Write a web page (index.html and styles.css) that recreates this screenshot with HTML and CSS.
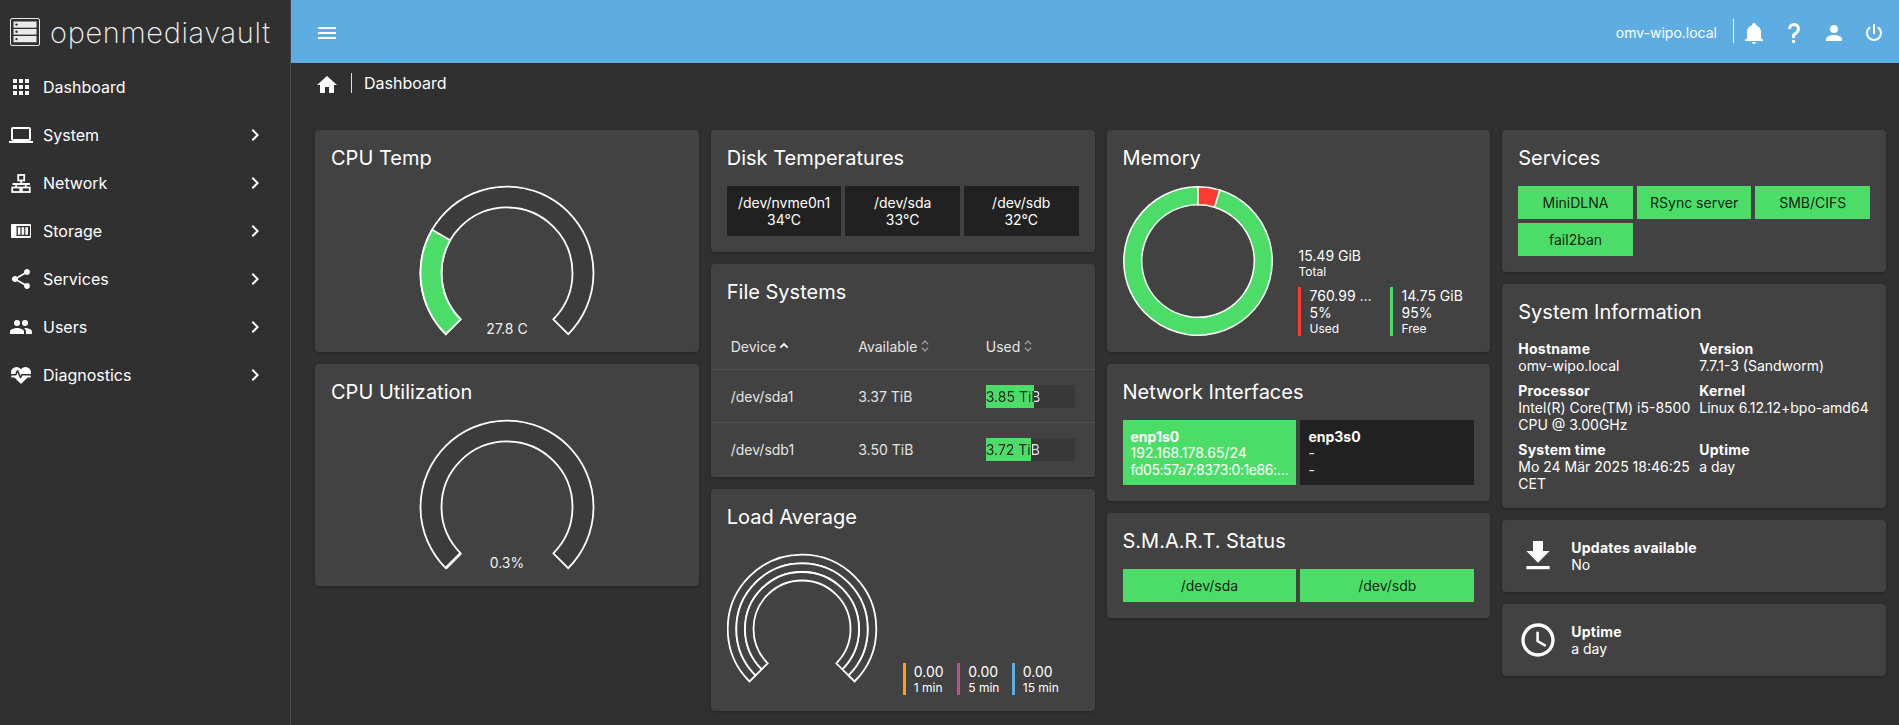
FILE: index.html
```html
<!DOCTYPE html>
<html lang="en">
<head>
<meta charset="utf-8">
<title>openmediavault</title>
<link rel="stylesheet" href="styles.css">
</head>
<body>
<div class="app">
  <aside class="sidebar">
    <div class="brand">
      <svg class="brand-icon" viewBox="0 0 30 28">
        <rect x="0.5" y="0.5" width="29" height="27" rx="1.5" class="brand-frame"/>
        <rect x="3.5" y="3.5" width="23" height="6.2" class="brand-bar"/>
        <rect x="3.5" y="11" width="23" height="5.6" class="brand-bar"/>
        <rect x="3.5" y="18" width="23" height="6.2" class="brand-bar"/>
        <circle cx="6.5" cy="6.6" r="1.2" class="brand-dot"/>
        <circle cx="6.5" cy="13.8" r="1.2" class="brand-dot"/>
        <circle cx="6.5" cy="21.1" r="1.2" class="brand-dot"/>
      </svg>
      <span class="brand-name">openmediavault</span>
    </div>
    <nav class="nav">
      <a class="nav-item"><svg class="icon" viewBox="0 0 24 24"><path d="M4 8h4V4H4v4zm6 12h4v-4h-4v4zm-6 0h4v-4H4v4zm0-6h4v-4H4v4zm6 0h4v-4h-4v4zm6-10v4h4V4h-4zm-6 4h4V4h-4v4zm6 6h4v-4h-4v4zm0 6h4v-4h-4v4z"/></svg><span class="nav-label">Dashboard</span></a>
      <a class="nav-item"><svg class="icon" viewBox="0 0 24 24"><path d="M4 6h16v10H4m16 2a2 2 0 0 0 2-2V6a2 2 0 0 0-2-2H4c-1.11 0-2 .89-2 2v10a2 2 0 0 0 2 2H0v2h24v-2h-4z"/></svg><span class="nav-label">System</span><svg class="icon" viewBox="0 0 24 24"><path d="M8.59 16.58 13.17 12 8.59 7.41 10 6l6 6-6 6-1.41-1.42z"/></svg></a>
      <a class="nav-item"><svg class="icon icon-line" viewBox="0 0 24 24"><rect x="9.200" y="4" width="6" height="5.500"/><rect x="3.200" y="16.500" width="8" height="4.500"/><rect x="12.800" y="16.500" width="8" height="4.500"/><path d="M12.200 9.500V13M3.500 13h17.400M7.200 13v3.500M16.800 13v3.500"/></svg><span class="nav-label">Network</span><svg class="icon" viewBox="0 0 24 24"><path d="M8.59 16.58 13.17 12 8.59 7.41 10 6l6 6-6 6-1.41-1.42z"/></svg></a>
      <a class="nav-item"><svg class="icon" viewBox="0 0 24 24"><path fill-rule="evenodd" d="M3 5h18a1 1 0 0 1 1 1v12a1 1 0 0 1-1 1H3a1 1 0 0 1-1-1V6a1 1 0 0 1 1-1zm4.500 2H21v10H7.500V7zm1.300 1.300v7.400h2.600V8.300H8.800zm3.800 0v7.400h2.600V8.300h-2.600zm3.800 0v7.400H19V8.300h-2.600z"/></svg><span class="nav-label">Storage</span><svg class="icon" viewBox="0 0 24 24"><path d="M8.59 16.58 13.17 12 8.59 7.41 10 6l6 6-6 6-1.41-1.42z"/></svg></a>
      <a class="nav-item"><svg class="icon" viewBox="0 0 24 24"><path d="M18 16.08c-.76 0-1.44.3-1.96.77L8.91 12.7c.05-.23.09-.46.09-.7s-.04-.47-.09-.7l7.05-4.11c.54.5 1.25.81 2.04.81 1.66 0 3-1.34 3-3s-1.34-3-3-3-3 1.34-3 3c0 .24.04.47.09.7L8.04 9.81C7.5 9.31 6.79 9 6 9c-1.66 0-3 1.34-3 3s1.34 3 3 3c.79 0 1.5-.31 2.04-.81l7.12 4.16c-.05.21-.08.43-.08.65 0 1.61 1.31 2.92 2.92 2.92s2.92-1.31 2.92-2.92-1.31-2.92-2.92-2.92z"/></svg><span class="nav-label">Services</span><svg class="icon" viewBox="0 0 24 24"><path d="M8.59 16.58 13.17 12 8.59 7.41 10 6l6 6-6 6-1.41-1.42z"/></svg></a>
      <a class="nav-item"><svg class="icon" viewBox="0 0 24 24"><path d="M16 13c-.29 0-.62.02-.97.05 1.16.84 1.97 1.97 1.97 3.45V19h6v-2.500c0-2.330-4.670-3.500-7-3.500m-8 0c-2.330 0-7 1.170-7 3.500V19h14v-2.500c0-2.330-4.670-3.500-7-3.500m0-2a3 3 0 0 0 3-3 3 3 0 0 0-3-3 3 3 0 0 0-3 3 3 3 0 0 0 3 3m8 0a3 3 0 0 0 3-3 3 3 0 0 0-3-3 3 3 0 0 0-3 3 3 3 0 0 0 3 3z"/></svg><span class="nav-label">Users</span><svg class="icon" viewBox="0 0 24 24"><path d="M8.59 16.58 13.17 12 8.59 7.41 10 6l6 6-6 6-1.41-1.42z"/></svg></a>
      <a class="nav-item"><svg class="icon" viewBox="0 0 24 24"><path d="M7.500 4A5.500 5.500 0 0 0 2 9.500c0 .5.09 1 .23 1.500H6.300l1.270-3.370c.3-.8 1.480-.88 1.860 0L11.500 13l.59-1.420c.13-.33.48-.58.91-.58h8.770c.14-.5.23-1 .23-1.500A5.500 5.500 0 0 0 16.500 4c-1.860 0-3.500.93-4.500 2.340C11 4.930 9.360 4 7.500 4M3 12.500a1 1 0 0 0-1 1 1 1 0 0 0 1 1h2.440L11 20c1 .9 1 .9 2 0l5.560-5.500H21a1 1 0 0 0 1-1 1 1 0 0 0-1-1h-7.730l-.88 2.030c-.34.8-1.500.82-1.850.01L8.500 9.500l-.96 2.380c-.15.4-.49.62-.93.62H3z"/></svg><span class="nav-label">Diagnostics</span><svg class="icon" viewBox="0 0 24 24"><path d="M8.59 16.58 13.17 12 8.59 7.41 10 6l6 6-6 6-1.41-1.42z"/></svg></a>
    </nav>
  </aside>

  <div class="main">
    <header class="toolbar">
      <svg class="icon" viewBox="0 0 24 24"><path d="M3 6h18v2H3V6m0 5h18v2H3v-2m0 5h18v2H3v-2z"/></svg>
      <span class="toolbar-spacer"></span>
      <span class="host">omv-wipo.local</span>
      <span class="toolbar-divider"></span>
      <span class="tool-btn"><svg class="icon" viewBox="0 0 24 24"><path d="M21 19v1H3v-1l2-2v-6c0-3.100 2.030-5.830 5-6.710V4a2 2 0 0 1 2-2 2 2 0 0 1 2 2v.29c2.970.88 5 3.610 5 6.710v6l2 2m-7 2a2 2 0 0 1-2 2 2 2 0 0 1-2-2"/></svg></span>
      <span class="tool-btn"><svg class="icon" viewBox="0 0 24 24"><path d="M10 19h3v3h-3v-3m2-17c5.350.22 7.680 5.620 4.500 9.670-.83 1-2.170 1.660-2.830 2.500C13 15 13 16 13 17h-3c0-1.670 0-3.080.67-4.080.66-1 2-1.590 2.830-2.250C15.920 8.430 15.320 5.260 12 5a3 3 0 0 0-3 3H6a6 6 0 0 1 6-6z"/></svg></span>
      <span class="tool-btn"><svg class="icon" viewBox="0 0 24 24"><path d="M12 4a4 4 0 0 1 4 4 4 4 0 0 1-4 4 4 4 0 0 1-4-4 4 4 0 0 1 4-4m0 10c4.420 0 8 1.790 8 4v2H4v-2c0-2.210 3.580-4 8-4z"/></svg></span>
      <span class="tool-btn"><svg class="icon" viewBox="0 0 24 24"><path d="M16.560 5.440l-1.450 1.450A5.969 5.969 0 0 1 18 12a6 6 0 0 1-6 6 6 6 0 0 1-6-6c0-2.170 1.160-4.060 2.880-5.120L7.440 5.440A7.961 7.961 0 0 0 4 12a8 8 0 0 0 8 8 8 8 0 0 0 8-8c0-2.720-1.360-5.120-3.440-6.560M13 3h-2v10h2"/></svg></span>
    </header>

    <div class="crumbs">
      <svg class="icon" viewBox="0 0 24 24"><path d="M10 20v-6h4v6h5v-8h3L12 3 2 12h3v8h5z"/></svg>
      <span class="crumb-divider"></span>
      <span class="crumb-text">Dashboard</span>
    </div>

    <div class="board">
      <div class="column">
        <section class="card">
          <h2 class="card-title">CPU Temp</h2>
          <svg class="gauge" viewBox="0 0 176 150">
            <path class="ring" d="M26.800 148.200A86.500 86.500 0 1 1 149.200 148.200L134.300 133.300A65.500 65.500 0 1 0 41.700 133.300Z"/>
            <path class="ring-ok" d="M26.800 148.200A86.500 86.500 0 0 1 13.100 43.750L31.300 54.250A65.500 65.500 0 0 0 41.700 133.300Z"/>
            <text class="gauge-text" x="88" y="148">27.8 C</text>
          </svg>
        </section>
        <section class="card">
          <h2 class="card-title">CPU Utilization</h2>
          <svg class="gauge" viewBox="0 0 176 150">
            <path class="ring" d="M26.800 148.200A86.500 86.500 0 1 1 149.200 148.200L134.300 133.300A65.500 65.500 0 1 0 41.700 133.300Z"/>
            <path class="ring-tick" d="M26.800 148.200L41.700 133.300"/>
            <text class="gauge-text" x="88" y="148">0.3%</text>
          </svg>
        </section>
      </div>

      <div class="column">
        <section class="card">
          <h2 class="card-title">Disk Temperatures</h2>
          <div class="tiles tiles-3">
            <div class="tile tile-dark">/dev/nvme0n1<br>34°C</div>
            <div class="tile tile-dark">/dev/sda<br>33°C</div>
            <div class="tile tile-dark">/dev/sdb<br>32°C</div>
          </div>
        </section>
        <section class="card card-table">
          <h2 class="card-title card-title-inset">File Systems</h2>
          <div class="fs-head">
            <span class="fs-th">Device<svg class="sort" viewBox="0 0 10 10"><path d="M2.400 6.200 5 3.600l2.600 2.600" class="sort-active"/></svg></span>
            <span class="fs-th">Available<svg class="sort" viewBox="0 0 10 10"><path d="M2.800 3.800 5 1.500l2.200 2.300M2.800 6.200 5 8.500l2.200-2.300" class="sort-idle"/></svg></span>
            <span class="fs-th">Used<svg class="sort" viewBox="0 0 10 10"><path d="M2.800 3.800 5 1.500l2.200 2.300M2.800 6.200 5 8.500l2.200-2.300" class="sort-idle"/></svg></span>
          </div>
          <div class="fs-row">
            <span>/dev/sda1</span><span>3.37 TiB</span>
            <div class="bar" style="--used:54%"><span class="bar-text">3.85 TiB</span></div>
          </div>
          <div class="fs-row">
            <span>/dev/sdb1</span><span>3.50 TiB</span>
            <div class="bar" style="--used:51.500%"><span class="bar-text">3.72 TiB</span></div>
          </div>
        </section>
        <section class="card">
          <h2 class="card-title">Load Average</h2>
          <div class="load">
            <svg class="load-gauge" viewBox="0 16 176 150">
              <path class="ring-line" d="M22.500 152.500A74.300 74.300 0 1 1 127.500 152.500L121.460 146.460A65.700 65.700 0 1 0 28.540 146.460Z"/>
              <path class="ring-line" d="M28.540 146.460A65.700 65.700 0 1 1 121.460 146.460L115.300 140.300A57 57 0 1 0 34.700 140.300Z"/>
              <path class="ring-line" d="M34.700 140.300A57 57 0 1 1 115.300 140.300L109.300 134.300A48.500 48.500 0 1 0 40.700 134.300Z"/>
            </svg>
            <div class="load-legend">
              <div class="legend-item legend-orange"><div>0.00</div><div class="small">1 min</div></div>
              <div class="legend-item legend-pink"><div>0.00</div><div class="small">5 min</div></div>
              <div class="legend-item legend-blue"><div>0.00</div><div class="small">15 min</div></div>
            </div>
          </div>
        </section>
      </div>

      <div class="column">
        <section class="card">
          <h2 class="card-title">Memory</h2>
          <div class="memory">
            <svg class="donut" viewBox="0 0 150 150">
              <path class="seg-free" d="M96.700 4.040A74.200 74.200 0 1 1 75 .8L75 18.700A56.300 56.300 0 1 0 91.460 21.160Z"/>
              <path class="seg-used" d="M75 .8A74.200 74.200 0 0 1 96.700 4.040L91.460 21.160A56.300 56.300 0 0 0 75 18.700Z"/>
            </svg>
            <div class="mem-info">
              <div class="mem-total"><div>15.49 GiB</div><div class="small">Total</div></div>
              <div class="mem-parts">
                <div class="mem-part mem-used"><div>760.99 …</div><div>5%</div><div class="small">Used</div></div>
                <div class="mem-part mem-free"><div>14.75 GiB</div><div>95%</div><div class="small">Free</div></div>
              </div>
            </div>
          </div>
        </section>
        <section class="card">
          <h2 class="card-title">Network Interfaces</h2>
          <div class="tiles tiles-2">
            <div class="tile-net tile-up"><div class="net-name">enp1s0</div><div>192.168.178.65/24</div><div class="net-addr">fd05:57a7:8373:0:1e86:…</div></div>
            <div class="tile-net tile-dark"><div class="net-name">enp3s0</div><div>-</div><div>-</div></div>
          </div>
        </section>
        <section class="card">
          <h2 class="card-title">S.M.A.R.T. Status</h2>
          <div class="tiles tiles-2">
            <div class="tile tile-ok">/dev/sda</div>
            <div class="tile tile-ok">/dev/sdb</div>
          </div>
        </section>
      </div>

      <div class="column">
        <section class="card">
          <h2 class="card-title">Services</h2>
          <div class="tiles tiles-3">
            <div class="tile tile-ok">MiniDLNA</div>
            <div class="tile tile-ok">RSync server</div>
            <div class="tile tile-ok">SMB/CIFS</div>
            <div class="tile tile-ok">fail2ban</div>
          </div>
        </section>
        <section class="card">
          <h2 class="card-title">System Information</h2>
          <div class="sysinfo">
            <div><div class="strong">Hostname</div><div>omv-wipo.local</div></div>
            <div><div class="strong">Version</div><div>7.7.1-3 (Sandworm)</div></div>
            <div><div class="strong">Processor</div><div>Intel(R) Core(TM) i5-8500 CPU @ 3.00GHz</div></div>
            <div><div class="strong">Kernel</div><div>Linux 6.12.12+bpo-amd64</div></div>
            <div><div class="strong">System time</div><div>Mo 24 Mär 2025 18:46:25 CET</div></div>
            <div><div class="strong">Uptime</div><div>a day</div></div>
          </div>
        </section>
        <section class="card card-stat">
          <svg class="stat-icon" viewBox="0 0 24 24"><path d="M19 9h-4V3H9v6H5l7 7 7-7zM5 18v2h14v-2H5z"/></svg>
          <div><div class="strong">Updates available</div><div>No</div></div>
        </section>
        <section class="card card-stat">
          <svg class="stat-icon" viewBox="0 0 24 24"><path d="M11.990 2C6.470 2 2 6.480 2 12s4.470 10 9.990 10C17.520 22 22 17.520 22 12S17.520 2 11.990 2zM12 20c-4.420 0-8-3.580-8-8s3.580-8 8-8 8 3.580 8 8-3.580 8-8 8zM12.500 7H11v6l5.250 3.150.75-1.230-4.500-2.670z"/></svg>
          <div><div class="strong">Uptime</div><div>a day</div></div>
        </section>
      </div>
    </div>
  </div>
</div>
</body>
</html>
```

FILE: styles.css
```css
* { box-sizing: border-box; }
html, body { margin: 0; height: 100%; overflow: hidden; }
body {
  background: #303030;
  color: #fff;
  font-family: Inter, "Liberation Sans", sans-serif;
  font-size: 14px;
}
.app { display: flex; height: 100vh; }
.icon { width: 24px; height: 24px; flex: none; fill: #fff; display: block; }
.icon-line { fill: none; stroke: #fff; stroke-width: 1.800; }

/* sidebar */
.sidebar { width: 291px; flex: none; border-right: 1px solid #4a4a4a; }
.brand { height: 63px; display: flex; align-items: center; padding-left: 10px; padding-top: 1px; }
.brand-icon { width: 30px; height: 28px; flex: none; }
.brand-frame { fill: none; stroke: #e8e8e8; stroke-width: 1; }
.brand-bar { fill: #eaeaea; }
.brand-dot { fill: #303030; }
.brand-name { margin-left: 10px; font-size: 29px; font-weight: 250; letter-spacing: .650px; line-height: 1; color: #f2f2f2; }
.nav-item { height: 48px; display: flex; align-items: center; padding-left: 9px; padding-right: 23px; }
.nav-label { flex: 1; margin-left: 10px; font-size: 16px; }

/* toolbar */
.main { flex: 1; min-width: 0; display: flex; flex-direction: column; }
.toolbar { height: 63px; flex: none; background: #5dade2; display: flex; align-items: center; padding: 2px 5px 0 24px; }
.toolbar-spacer { flex: 1; }
.host { margin-right: 16px; color: #fff; }
.toolbar-divider { width: 1px; height: 24px; background: #fff; margin-bottom: 3px; }
.tool-btn { width: 40px; display: flex; justify-content: center; }

/* breadcrumb */
.crumbs { height: 67px; flex: none; display: flex; align-items: flex-start; padding: 10px 0 0 24px; }
.crumb-divider { width: 1px; height: 20px; background: #e0e0e0; margin-left: 12px; }
.crumb-text { margin-left: 12px; line-height: 21px; font-size: 16px; }

/* board */
.board { flex: 1; display: flex; gap: 12px; padding: 0 13px 14px 24px; align-items: flex-start; }
.column { flex: 1; min-width: 0; display: flex; flex-direction: column; gap: 12px; }
.card { background: #424242; border-radius: 4px; padding: 16px; box-shadow: 0 1px 3px rgba(0, 0, 0, .25); }
.card-title { margin: 0 0 16px; font-size: 20px; font-weight: 400; line-height: 24px; }
.small { font-size: 12px; }
.strong { font-weight: 700; letter-spacing: .25px; }

/* gauges */
.gauge { display: block; width: 176px; height: 150px; margin: 0 auto; overflow: visible; }
.ring { fill: #3c3c3c; stroke: #fff; stroke-width: 1.800; }
.ring-ok { fill: #4cdd69; stroke: #fff; stroke-width: 1.800; }
.ring-tick { fill: none; stroke: #fff; stroke-width: 2.800; }
.ring-line { fill: #424242; stroke: #fff; stroke-width: 1.800; }
.gauge-text { fill: #f0f0f0; font-size: 14px; text-anchor: middle; }

/* tiles */
.tiles { display: grid; gap: 4px; }
.tiles-2 { grid-template-columns: 1fr 1fr; }
.tiles-3 { grid-template-columns: 1fr 1fr 1fr; }
.tile { padding: 8px; text-align: center; line-height: 17px; font-size: 14px; }
.tile-dark { background: #212121; }
.tile-ok { background: #4cdd69; color: rgba(0, 0, 0, .87); }
.tile-net { padding: 9px 8px 7px; line-height: 16.330px; min-width: 0; }
.tile-up { background: #4cdd69; }
.net-name { font-weight: 700; }
.net-addr { white-space: nowrap; letter-spacing: -.430px; }

/* file systems */
.card-table { padding: 16px 0 1px; }
.card-title-inset { margin-left: 16px; }
.fs-head, .fs-row {
  display: grid;
  grid-template-columns: 127.500px 127.500px 1fr;
  padding: 0 20px;
  align-items: center;
  border-bottom: 1px solid #505050;
  color: #e4e4e4;
}
.fs-head { height: 50px; padding-top: 3px; }
.fs-row { height: 53px; }
.fs-row:last-child { border-bottom: 1px solid #4a4a4a; }
.fs-th { display: flex; align-items: center; gap: 1px; }
.sort { width: 14px; height: 14px; flex: none; fill: none; }
.sort-active { stroke: #fff; stroke-width: 1.300; fill: none; }
.sort-idle { stroke: #9a9a9a; stroke-width: 1; fill: none; }
.bar { height: 23px; background: #383838; position: relative; }
.bar::before { content: ""; position: absolute; left: 0; top: 0; bottom: 0; width: var(--used); background: #4cdd69; }
.bar-text {
  position: relative;
  display: block;
  line-height: 23px;
  background: linear-gradient(90deg, #222 var(--used), #e8e8e8 var(--used));
  -webkit-background-clip: text;
  background-clip: text;
  color: transparent;
}

/* load */
.load { display: flex; align-items: flex-end; }
.load-gauge { width: 176px; height: 150px; flex: none; display: block; }
.load-legend { display: flex; }
.legend-item { width: 54.500px; border-left: 3px solid; padding-left: 8px; }
.legend-orange { border-color: #ff9f0a; }
.legend-pink { border-color: #bf4f93; }
.legend-blue { border-color: #5dade2; }

/* memory */
.memory { display: flex; align-items: flex-end; }
.donut { width: 150px; height: 150px; flex: none; display: block; }
.seg-free { fill: #4cdd69; stroke: #fff; stroke-width: 1.500; }
.seg-used { fill: #ff3b30; stroke: #fff; stroke-width: 1.500; }
.mem-info { margin-left: 25px; flex: 1; min-width: 0; }
.mem-total { margin-bottom: 8px; padding-left: 1px; }
.mem-parts { display: flex; }
.mem-part { flex: none; width: 92px; border-left: 3px solid; padding-left: 9px; }
.mem-used { border-color: #ff3b30; }
.mem-free { border-color: #4cdd69; }

/* system info */
.sysinfo { display: grid; grid-template-columns: 173px 1fr; gap: 8px; }

/* stat cards */
.card-stat { display: flex; align-items: center; gap: 13px; }
.stat-icon { width: 40px; height: 40px; flex: none; fill: #fff; display: block; }
```
